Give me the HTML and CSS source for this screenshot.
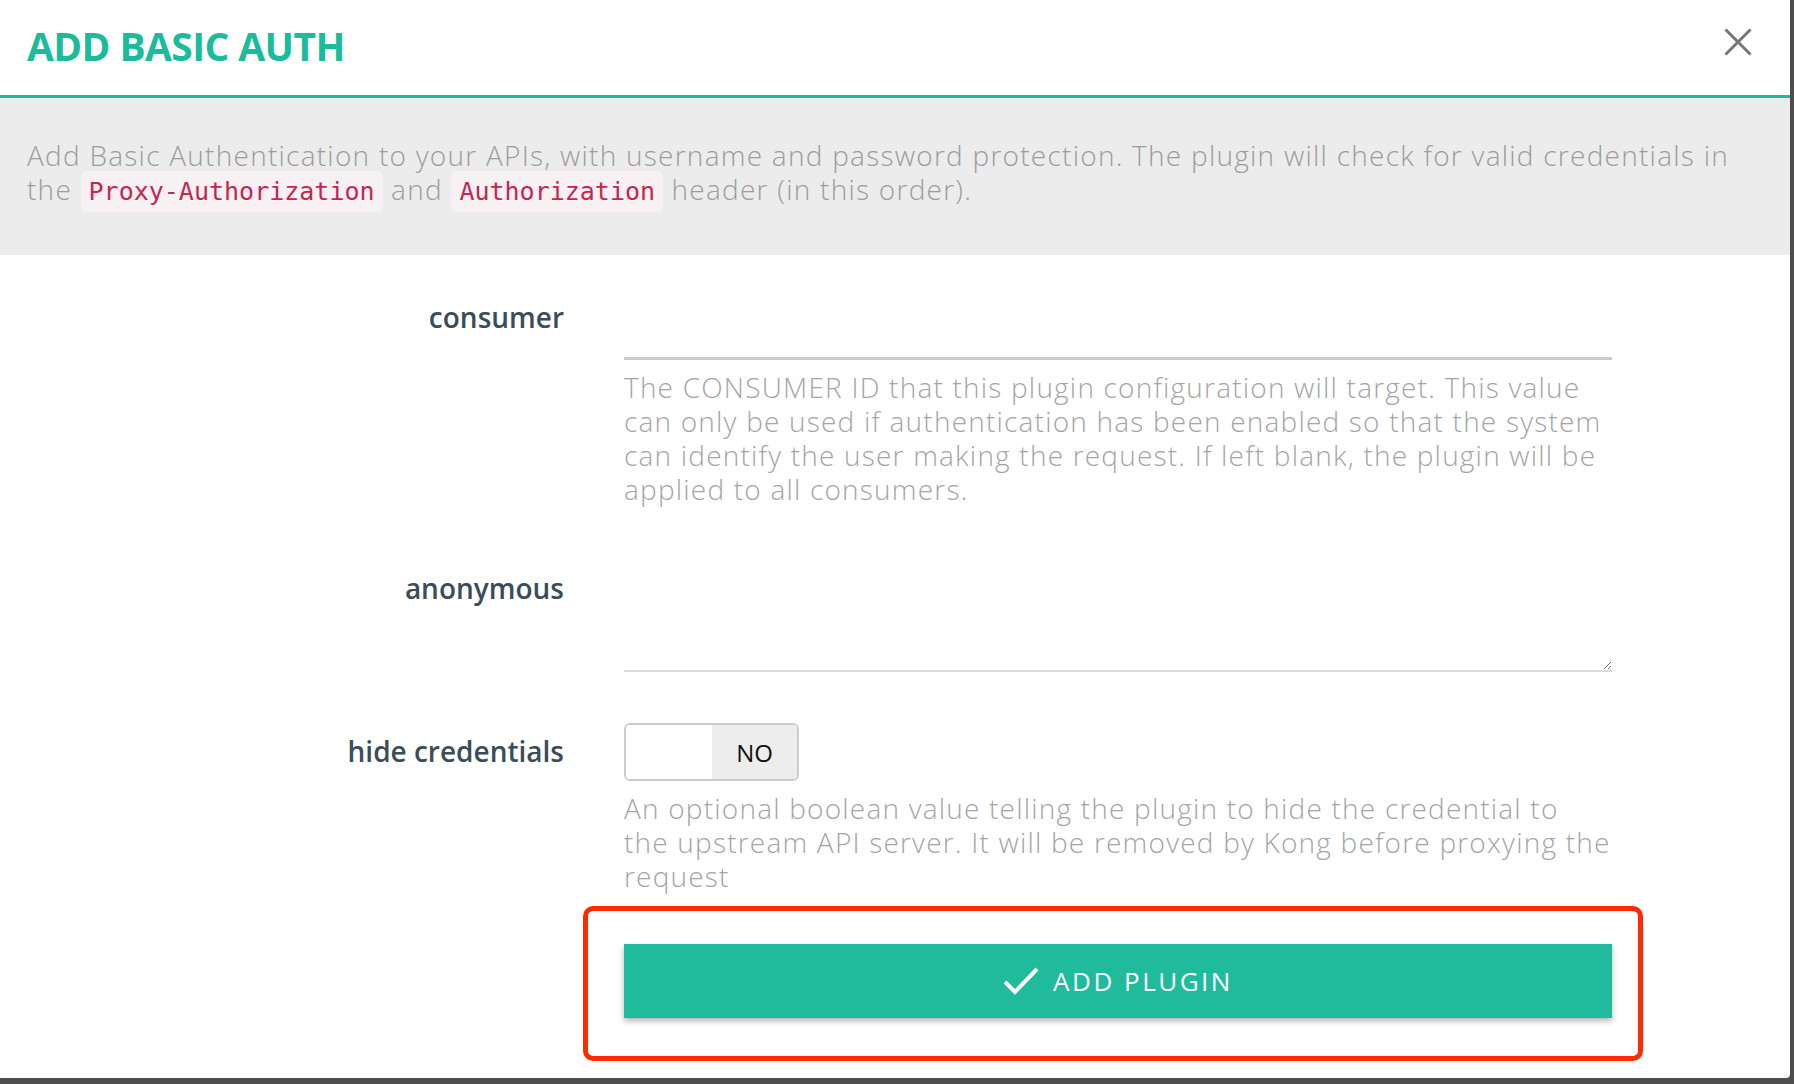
FILE: index.html
```html
<!DOCTYPE html>
<html lang="en">
<head>
<meta charset="utf-8">
<title>Add Basic Auth</title>
<link rel="stylesheet" href="styles.css">
</head>
<body>
<div class="modal">
  <header class="modal-header">
    <h1 class="modal-title">ADD BASIC AUTH</h1>
    <button class="close" type="button" aria-label="Close">
      <svg width="28" height="28" viewBox="0 0 28 28"><path d="M1.5 1.5 L26.5 26.5 M26.5 1.5 L1.5 26.5" stroke="#777" stroke-width="3" fill="none"/></svg>
    </button>
  </header>
  <div class="modal-desc">Add Basic Authentication to your APIs, with username and password protection. The plugin will check for valid credentials in the <code>Proxy-Authorization</code> and <code>Authorization</code> header (in this order).</div>
  <form class="plugin-form">
    <div class="form-row">
      <label class="form-label">consumer</label>
      <div class="form-field">
        <input class="text-input" type="text">
        <p class="help">The CONSUMER ID that this plugin configuration will target. This value can only be used if authentication has been enabled so that the system can identify the user making the request. If left blank, the plugin will be applied to all consumers.</p>
      </div>
    </div>
    <div class="form-row form-row--area">
      <label class="form-label">anonymous</label>
      <div class="form-field">
        <textarea class="text-area"></textarea>
      </div>
    </div>
    <div class="form-row">
      <label class="form-label">hide credentials</label>
      <div class="form-field">
        <div class="switch"><span class="switch-blank"></span><span class="switch-label">NO</span></div>
        <p class="help">An optional boolean value telling the plugin to hide the credential to the&nbsp;upstream API server. It will be removed by Kong before proxying the request</p>
      </div>
    </div>
    <div class="form-row">
      <div></div>
      <div class="form-field">
        <div class="submit-wrap">
          <button class="submit" type="button">
            <svg width="36" height="28" viewBox="0 0 36 28"><polyline points="2,15 12,25 34,2" fill="none" stroke="#fff" stroke-width="4"/></svg>
            <span>ADD PLUGIN</span>
          </button>
          <span class="highlight"></span>
        </div>
      </div>
    </div>
  </form>
</div>
</body>
</html>
```
FILE: styles.css
```css
* { box-sizing: border-box; }

body {
  margin: 0;
  background: #4d4d4d;
  font-family: "Open Sans", "DejaVu Sans", sans-serif;
}

.modal {
  width: 1790px;
  height: 1078px;
  background: #fff;
  border-bottom-right-radius: 4px;
  overflow: hidden;
}

.modal-header {
  display: flex;
  align-items: flex-start;
  height: 98px;
  padding: 19px 38px 0 27px;
  border-bottom: 3px solid #1abc9c;
}

.modal-title {
  margin: 0;
  font-size: 39px;
  line-height: 53px;
  font-weight: 700;
  letter-spacing: -0.6px;
  color: #1abc9c;
}

.close {
  margin-left: auto;
  margin-top: 9px;
  width: 28px;
  height: 28px;
  padding: 0;
  border: 0;
  background: none;
  display: block;
}
.close svg { display: block; }

.modal-desc {
  background: #ececec;
  padding: 40px 27px 49px;
  font-size: 28px;
  line-height: 34px;
  font-weight: 300;
  letter-spacing: 1.25px;
  color: #9c9c9c;
}

.modal-desc code {
  font-family: "DejaVu Sans Mono", "Liberation Mono", monospace;
  font-size: 25px;
  line-height: 1;
  letter-spacing: 0;
  color: #c7254e;
  background: #f7f1f3;
  padding: 6px 8px;
  border-radius: 6px;
}

.plugin-form {
  padding-top: 34px;
}

.form-row {
  display: grid;
  grid-template-columns: 564px 988px;
  column-gap: 60px;
  margin-bottom: 51px;
}

.form-row--area {
  padding-top: 3px;
}

.form-label {
  padding-top: 8px;
  text-align: right;
  font-size: 28px;
  line-height: 40px;
  font-weight: 600;
  color: #3b4d58;
}

.text-input {
  display: block;
  width: 100%;
  height: 71px;
  border: 0;
  border-bottom: 3px solid #cbcbcb;
  background: transparent;
  outline: none;
  font: inherit;
}

.text-area {
  display: block;
  width: 100%;
  height: 112px;
  border: 0;
  border-bottom: 2px solid #dcdcdc;
  background: transparent;
  outline: none;
  resize: vertical;
  font: inherit;
}

.help {
  margin: 10px -7px 0 0;
  font-size: 28px;
  line-height: 34px;
  font-weight: 300;
  letter-spacing: 1.2px;
  color: #a5a5a5;
}

.switch {
  display: flex;
  width: 175px;
  height: 58px;
  border: 2px solid #cccccc;
  border-radius: 6px;
  overflow: hidden;
}

.switch-blank {
  flex: 1;
  background: #fff;
}

.switch-label {
  width: 85px;
  background: #ededed;
  display: flex;
  align-items: center;
  justify-content: center;
  font-size: 24px;
  color: #111;
}

.submit-wrap {
  position: relative;
}

.submit {
  width: 988px;
  height: 74px;
  border: 0;
  background: #1fbb9c;
  color: #fff;
  box-shadow: 0 3px 6px rgba(0, 0, 0, 0.3);
  display: flex;
  align-items: center;
  justify-content: center;
  gap: 14px;
  font-family: inherit;
  font-size: 26px;
  letter-spacing: 2.5px;
}

.submit svg { display: block; }

.highlight {
  position: absolute;
  top: -38px;
  left: -41px;
  right: -31px;
  bottom: -43px;
  border: 5px solid #ff2a00;
  border-radius: 10px;
  pointer-events: none;
}
```
